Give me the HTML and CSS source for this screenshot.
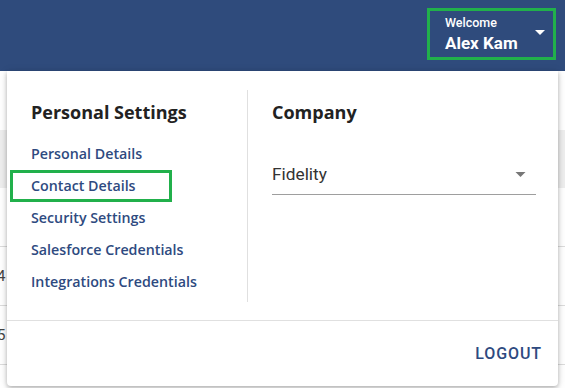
FILE: index.html
```html
<!DOCTYPE html>
<html>
<head>
<meta charset="utf-8">
<link rel="stylesheet" href="styles.css">
</head>
<body>
<header class="topbar">
  <div class="user highlight">
    <div class="user-text">
      <div class="welcome">Welcome</div>
      <div class="name">Alex Kam</div>
    </div>
    <svg class="caret" width="10" height="5" viewBox="0 0 10 5"><path d="M0 0h10L5 5z" fill="#fff"/></svg>
  </div>
</header>
<main class="page">
  <div class="thead"></div>
  <div class="row"></div>
  <div class="row"><span class="cell">4</span></div>
  <div class="row"><span class="cell">5</span></div>
  <div class="row last"></div>
</main>
<div class="menu">
  <div class="menu-body">
    <section class="col col-left">
      <h2 class="title">Personal Settings</h2>
      <nav class="links">
        <a class="link">Personal Details</a>
        <a class="link highlight boxed">Contact Details</a>
        <a class="link">Security Settings</a>
        <a class="link">Salesforce Credentials</a>
        <a class="link">Integrations Credentials</a>
      </nav>
    </section>
    <section class="col col-right">
      <h2 class="title">Company</h2>
      <div class="select">
        <span class="select-value">Fidelity</span>
        <svg width="11" height="5" viewBox="0 0 10 5"><path d="M0 0h10L5 5z" fill="#777"/></svg>
      </div>
    </section>
  </div>
  <footer class="menu-foot">
    <button class="logout">LOGOUT</button>
  </footer>
</div>
</body>
</html>
```
FILE: styles.css
```css
* { box-sizing: border-box; }
html, body { margin: 0; padding: 0; }
body {
  width: 565px;
  height: 388px;
  overflow: hidden;
  background: #fff;
  font-family: "Open Sans", "Noto Sans", sans-serif;
  position: relative;
}
.topbar {
  height: 71px;
  background: #2f4b7c;
  display: flex;
  justify-content: flex-end;
  align-items: flex-start;
  padding: 8px 9px 0 0;
}
.highlight { outline: 3px solid #21b04b; outline-offset: -3px; }
.user {
  width: 129px;
  height: 52px;
  display: flex;
  align-items: center;
  padding: 0 11px 0 18px;
  color: #fff;
}
.user-text { flex: 1; }
.welcome { font-family: "Roboto", sans-serif; font-weight: 500; font-size: 12.5px; line-height: 15px; margin-top: -1px; }
.name { font-family: "Roboto", sans-serif; font-weight: 700; font-size: 17px; line-height: 20px; margin-top: 3px; }
.caret { margin-top: -4px; }
.page { padding-top: 59px; }
.thead { height: 58px; background: #eeeeee; }
.row { height: 59px; border-bottom: 1px solid #dcdcdc; color: #444; font-family: "Roboto", sans-serif; font-size: 15px; display: flex; align-items: center; }
.row.last { height: 22px; border-bottom: 0; }
.cell { margin-left: -3px; }
.menu {
  position: absolute;
  left: 7px;
  top: 71px;
  width: 551px;
  height: 315px;
  background: #fff;
  border-radius: 0 0 4px 4px;
  box-shadow: 0 2px 4px rgba(0,0,0,0.25), 0 1px 10px rgba(0,0,0,0.12);
  display: flex;
  flex-direction: column;
}
.menu-body { flex: 1; display: flex; padding-top: 19px; }
.col-left {
  width: 241px;
  height: 212px;
  border-right: 1px solid #e0e0e0;
  padding-left: 24px;
}
.col-right { flex: 1; padding: 0 22px 0 24px; }
.title {
  margin: 10px 0 0;
  font-size: 18px;
  line-height: 24px;
  font-weight: 700;
  color: #222;
}
.links { display: flex; flex-direction: column; margin-top: 14px; }
.link {
  font-size: 14.25px;
  font-weight: 600;
  color: #2e4a80;
  line-height: 20px;
  height: 32px;
  display: flex;
  align-items: center;
}
.link.boxed { margin-left: -21px; padding-left: 21px; width: 162px; }
.select {
  margin-top: 36px;
  height: 35px;
  border-bottom: 1px solid #9e9e9e;
  display: flex;
  align-items: center;
  justify-content: space-between;
  padding: 0 10px 6px 0;
}
.select-value { font-family: "Roboto", sans-serif; font-size: 17.3px; color: #333; }
.menu-foot {
  height: 66px;
  border-top: 1px solid #e0e0e0;
  display: flex;
  justify-content: flex-end;
  align-items: center;
  padding-right: 16px;
}
.logout {
  border: 0;
  background: none;
  padding: 0;
  font-family: "Roboto", sans-serif;
  font-weight: 500;
  font-size: 16px;
  letter-spacing: 0.9px;
  color: #2e4a80;
}
```
